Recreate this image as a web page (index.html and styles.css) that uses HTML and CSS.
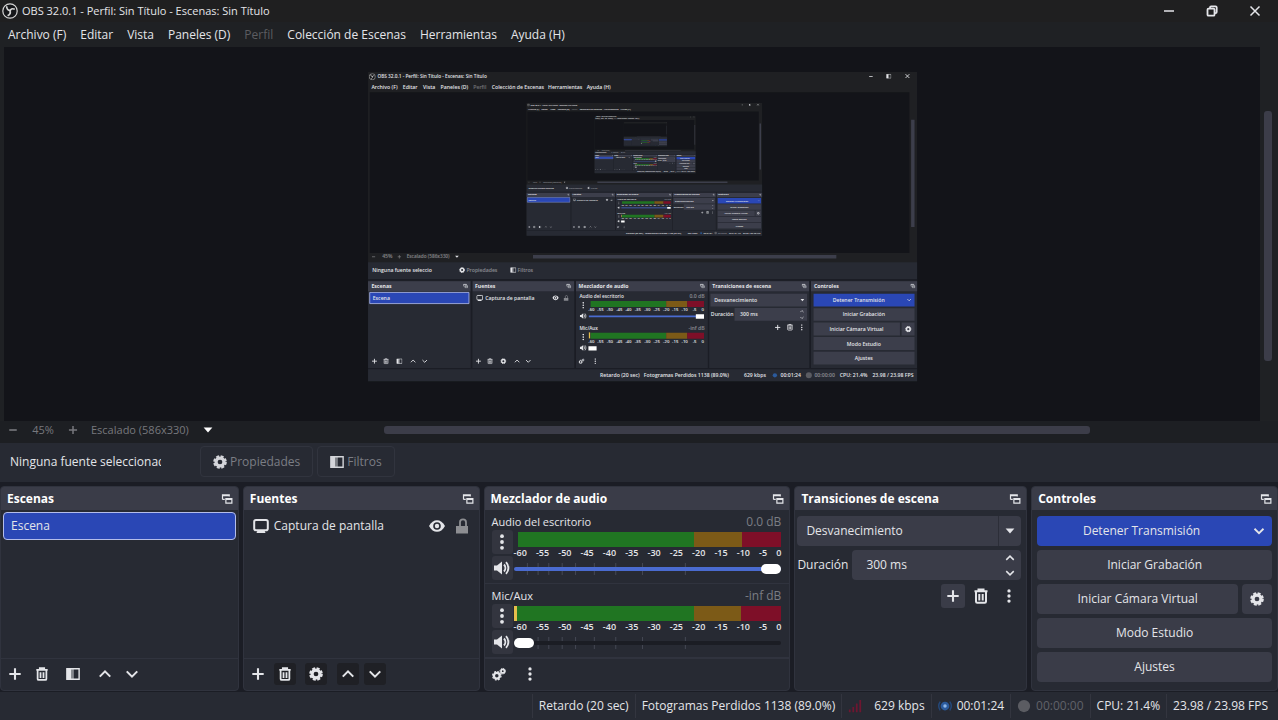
FILE: index.html
```
<!DOCTYPE html>
<html lang="es">
<head>
    <meta charset="UTF-8">
    <meta name="viewport" content="width=device-width, initial-scale=1.0">
    <title>OBS 32.0.1 - Perfil: Sin Título - Escenas: Sin Título</title>
    <link rel="stylesheet" href="styles.css">
</head>
<body>
    <!-- Shared icons -->
    <svg class="sprite" aria-hidden="true">
        <symbol id="plus" viewBox="0 0 16 16"><path d="M8 1.500v13M1.500 8h13" fill="none" stroke="currentColor" stroke-width="2.400"/></symbol>
        <symbol id="minus" viewBox="0 0 16 16"><path d="M2 8h12" fill="none" stroke="currentColor" stroke-width="2.6"/></symbol>
        <symbol id="trash" viewBox="0 0 16 16"><path d="M1.5 3.2h13M5.5 3V1.4h5V3M3 4v9.6c0 .8.5 1.2 1.2 1.2h7.600c.7 0 1.200-.4 1.200-1.200V4M6.300 6v6.500M9.700 6v6.500" fill="none" stroke="currentColor" stroke-width="2"/></symbol>
        <symbol id="filter" viewBox="0 0 16 16"><path d="M1 2h14v12H1z" fill="none" stroke="currentColor" stroke-width="1.6"/><path d="M1 2h5v12H1z" fill="currentColor"/><path d="M6 2h3v12H6z" fill="currentColor" opacity=".5"/></symbol>
        <symbol id="up" viewBox="0 0 16 16"><path d="M2 11l6-6 6 6" fill="none" stroke="currentColor" stroke-width="2.400"/></symbol>
        <symbol id="down" viewBox="0 0 16 16"><path d="M2 5l6 6 6-6" fill="none" stroke="currentColor" stroke-width="2.400"/></symbol>
        <symbol id="caret" viewBox="0 0 16 16"><path d="M1 4h14l-7 8z" fill="currentColor"/></symbol>
        <symbol id="dots" viewBox="0 0 16 16"><circle cx="8" cy="2.200" r="1.900" fill="currentColor"/><circle cx="8" cy="8" r="1.900" fill="currentColor"/><circle cx="8" cy="13.800" r="1.900" fill="currentColor"/></symbol>
        <symbol id="gear" viewBox="0 0 16 16"><circle cx="8" cy="8" r="4.500" fill="none" stroke="currentColor" stroke-width="3.600"/><circle cx="8" cy="8" r="6.600" fill="none" stroke="currentColor" stroke-width="2.400" stroke-dasharray="3.400 1.780"/></symbol>
        <symbol id="gears" viewBox="0 0 16 16"><circle cx="5.500" cy="10" r="3.300" fill="none" stroke="currentColor" stroke-width="2.600"/><circle cx="5.500" cy="10" r="4.800" fill="none" stroke="currentColor" stroke-width="1.400" stroke-dasharray="2.200 1.570"/><circle cx="12.300" cy="4.800" r="2" fill="none" stroke="currentColor" stroke-width="2"/><circle cx="12.300" cy="4.800" r="3.200" fill="none" stroke="currentColor" stroke-dasharray="1.500 1"/></symbol>
        <symbol id="float" viewBox="0 0 16 16"><path d="M2 8.500V2.500h9v2M2 3.500h9M5 8.500H2" fill="none" stroke="currentColor" stroke-width="1.600"/><path d="M6.500 7.500h8v6h-8zM6.500 8.500h8" fill="none" stroke="currentColor" stroke-width="1.600"/></symbol>
        <symbol id="monitor" viewBox="0 0 16 16"><rect x="1.200" y="2" width="13.600" height="10.200" rx="1.800" fill="none" stroke="currentColor" stroke-width="2"/><path d="M4.500 12.500h7l1 2.500h-9z" fill="currentColor"/></symbol>
        <symbol id="eye" viewBox="0 0 16 16"><path d="M0 8c2-4 5-5.800 8-5.800S14 4 16 8c-2 4-5 5.800-8 5.800S2 12 0 8z" fill="currentColor"/><circle cx="8" cy="8" r="3.800" fill="#272a33"/><circle cx="8" cy="8" r="2.200" fill="currentColor"/></symbol>
        <symbol id="unlock" viewBox="0 0 16 16"><path d="M2 8h12v7.500H2z" fill="currentColor"/><path d="M6 8V4.200C6 .5 12 .5 12 4.200V8" fill="none" stroke="currentColor" stroke-width="1.800"/></symbol>
        <symbol id="speaker" viewBox="0 0 16 16"><path d="M0 5.500h3L8 1.500v13l-5-4H0z" fill="currentColor"/><path d="M10 4.500c1.800 2 1.800 5 0 7M12 2.200c3.200 3.300 3.200 8.300 0 11.600" fill="none" stroke="currentColor" stroke-width="1.900"/></symbol>
        <symbol id="obs" viewBox="0 0 16 16"><circle cx="8" cy="8" r="7.200" fill="#16171a" stroke="#d6d6d6" stroke-width="1.200"/><path d="M4.600 3.200c.1 3 1.500 4.300 4 4.500M12.800 6.300c-2.600-1.200-4.300-.3-5 2M5.600 12.700c2.500-1.300 3.300-3.200 2.200-5.400" fill="none" stroke="#d6d6d6" stroke-width="1.700"/></symbol>
    </svg>

    <header class="titlebar">
        <svg class="icon logo"><use href="#obs"/></svg>
        <h1>OBS 32.0.1 - Perfil: Sin Título - Escenas: Sin Título</h1>
        <div class="window-buttons">
            <button aria-label="Minimizar"><svg viewBox="0 0 12 12"><path d="M1 6h10" stroke="currentColor" stroke-width="1.500"/></svg></button>
            <button aria-label="Restaurar"><svg viewBox="0 0 12 12"><path d="M4 3V2.500Q4 1.300 5.200 1.300H9.500Q10.700 1.300 10.700 2.500V7Q10.700 8.200 9.500 8.200H9M2.500 3.700h5q1 0 1 1v5q0 1-1 1h-5q-1 0-1-1v-5q0-1 1-1z" fill="none" stroke="currentColor" stroke-width="1.800"/></svg></button>
            <button aria-label="Cerrar"><svg viewBox="0 0 12 12"><path d="M1.500 1.500l9 9M10.500 1.500l-9 9" stroke="currentColor" stroke-width="1.500"/></svg></button>
        </div>
    </header>

    <nav class="menu">
        <button>Archivo (F)</button>
        <button>Editar</button>
        <button>Vista</button>
        <button>Paneles (D)</button>
        <button disabled>Perfil</button>
        <button>Colección de Escenas</button>
        <button>Herramientas</button>
        <button>Ayuda (H)</button>
    </nav>

    <!-- Captured screen, repeated inside itself -->
    <main class="preview">
        <div class="stage">
            <svg class="capture" viewBox="0 0 1278 720" role="img" aria-label="Captura de pantalla">
                <defs>
                    <g id="scale">
                        <text x="520">-60</text><text x="541">-55</text><text x="563">-50</text><text x="585">-45</text><text x="606">-40</text><text x="628">-35</text><text x="650">-30</text><text x="672">-25</text><text x="694">-20</text><text x="715">-15</text><text x="737">-10</text><text x="760">-5</text><text x="779">0</text>
                    </g>
                    <g id="screen">
                        <path fill="#1f2023" d="M0 0h1278v720H0z"/>
                        <path fill="#131419" d="M4 47h1256v374H4z"/>
                        <path fill="#272a33" d="M0 443h1278v277H0z"/>
                        <path fill="#3c3e4b" d="M1264 111h8v250h-8zM384 426h706v8H384zM0 487h239v23H0zM243 487h237v23H243zM484 487h307v23H484zM794 487h233v23H794zM1031 487h247v23h-247zM797 516h225v30H797zM853 549h169v30H853zM1037 550h235v29h-235zM1037 583h201v30h-201zM1242 583h30v30h-30zM1037 617h235v30h-235zM1037 651h235v30h-235z"/>
                        <path fill="#1b1d25" d="M239 486h4v203h-4zM480 486h4v203h-4zM791 486h3v203h-3zM1027 486h4v203h-4zM0 482h1278v4H0zM0 689h1278v3H0z"/>
                        <path fill="#2a47b5" stroke="#a9b4e6" stroke-width="2" d="M4 513h231v26H4z"/>
                        <path fill="#2a47b5" d="M1037 516h235v30h-235z"/>
                        <path fill="#207522" d="M518 533h176v14H518zM518 607h176v14H518z"/>
                        <path fill="#7c5a17" d="M694 533h49v14h-49zM694 607h49v14h-49z"/>
                        <path fill="#7e0f28" d="M743 533h39v14h-39zM743 607h39v14h-39z"/>
                        <path fill="#4a6bd0" d="M514 567h250v4H514z"/>
                        <path fill="#fff" d="M763 564h19v10h-19zM513 638h19v10h-19z"/>
                        <path fill="#e5bd4c" d="M514 606h3v14h-3z"/>
                        <g color="#e4e5e9">
                            <use href="#obs" x="2" y="3" width="16" height="16"/>
                            <use href="#minus" x="1165" y="5" width="11" height="11"/>
                            <use href="#filter" x="1206" y="4" width="12" height="12"/>
                            <path d="M1251 5l9 9M1260 5l-9 9" stroke="#e4e5e9" stroke-width="2"/>
                            <use href="#minus" x="8" y="425" width="10" height="10" opacity=".5"/><use href="#plus" x="68" y="425" width="10" height="10" opacity=".5"/>
                            <use href="#caret" x="202" y="425" width="10" height="10"/>
                            <use href="#gear" x="212" y="454" width="14" height="14"/>
                            <use href="#filter" x="331" y="454" width="14" height="14"/>
                            <use href="#monitor" x="252" y="518" width="16" height="16"/>
                            <use href="#eye" x="429" y="518" width="15" height="15"/>
                            <use href="#unlock" x="454" y="518" width="14" height="16" opacity=".5"/>
                            <use href="#float" x="221" y="492" width="12" height="12"/><use href="#float" x="461" y="492" width="12" height="12"/><use href="#float" x="772" y="492" width="12" height="12"/><use href="#float" x="1009" y="492" width="12" height="12"/><use href="#float" x="1262" y="492" width="12" height="12"/>
                            <use href="#dots" x="493" y="535" width="16" height="16"/><use href="#dots" x="493" y="609" width="16" height="16"/>
                            <use href="#speaker" x="493" y="560" width="16" height="16"/><use href="#speaker" x="493" y="634" width="16" height="16"/>
                            <use href="#caret" x="1006" y="526" width="10" height="10"/><use href="#down" x="1254" y="525" width="11" height="11"/>
                            <use href="#up" x="1005" y="552" width="10" height="10"/><use href="#down" x="1005" y="567" width="10" height="10"/>
                            <use href="#plus" x="946" y="587" width="15" height="15"/><use href="#trash" x="974" y="586" width="16" height="16"/><use href="#dots" x="1002" y="587" width="15" height="15"/>
                            <use href="#gear" x="1250" y="591" width="15" height="15"/>
                            <use href="#plus" x="8" y="666" width="14" height="14"/><use href="#trash" x="35" y="666" width="14" height="14"/><use href="#filter" x="66" y="666" width="14" height="14"/><use href="#up" x="98" y="666" width="14" height="14"/><use href="#down" x="125" y="666" width="14" height="14"/>
                            <use href="#plus" x="250" y="666" width="14" height="14"/><use href="#trash" x="277" y="666" width="14" height="14"/><use href="#gear" x="308" y="666" width="14" height="14"/><use href="#up" x="340" y="666" width="14" height="14"/><use href="#down" x="366" y="666" width="14" height="14"/>
                            <use href="#gears" x="490" y="666" width="14" height="14"/><use href="#dots" x="522" y="666" width="14" height="14"/>
                            <circle cx="947" cy="706" r="5" fill="#2b5a9c"/><circle cx="1026" cy="706" r="7" fill="#5b5c62"/>
                        </g>
                        <g class="screen-text">
                            <text x="22" y="15" class="screen-title">OBS 32.0.1 - Perfil: Sin Título - Escenas: Sin Título</text>
                            <text x="8" y="39">Archivo (F)</text><text x="81" y="39">Editar</text><text x="128" y="39">Vista</text><text x="169" y="39">Paneles (D)</text><text x="245" y="39" opacity=".4">Perfil</text><text x="288" y="39">Colección de Escenas</text><text x="419" y="39">Herramientas</text><text x="509" y="39">Ayuda (H)</text>
                            <g opacity=".5"><text x="33" y="434">45%</text><text x="90" y="434" class="screen-title">Escalado (586x330)</text><text x="229" y="466">Propiedades</text><text x="348" y="466">Filtros</text><text x="748" y="526">0.0 dB</text><text x="746" y="600">-inf dB</text><text x="1039" y="711">00:00:00</text></g>
                            <text x="10" y="466">Ninguna fuente seleccio</text>
                            <g font-weight="700"><text x="8" y="502">Escenas</text><text x="249" y="502">Fuentes</text><text x="490" y="502">Mezclador de audio</text><text x="801" y="502">Transiciones de escena</text><text x="1038" y="502">Controles</text></g>
                            <text x="11" y="530">Escena</text><text x="273" y="530">Captura de pantalla</text><text x="492" y="526" class="screen-title">Audio del escritorio</text><text x="492" y="600" class="screen-title">Mic/Aux</text>
                            <text x="806" y="535">Desvanecimiento</text><text x="798" y="569">Duración</text><text x="866" y="569">300 ms</text>
                            <g class="screen-scale"><use href="#scale" y="557"/><use href="#scale" y="630"/></g>
                            <g text-anchor="middle"><text x="1142" y="535">Detener Transmisión</text><text x="1154" y="569">Iniciar Grabación</text><text x="1137" y="603">Iniciar Cámara Virtual</text><text x="1154" y="637">Modo Estudio</text><text x="1154" y="671">Ajustes</text></g>
                            <text x="540" y="711">Retardo (20 sec)</text><text x="642" y="711">Fotogramas Perdidos 1138 (89.0%)</text><text x="875" y="711">629 kbps</text><text x="960" y="711">00:01:24</text><text x="1098" y="711">CPU: 21.4%</text><text x="1174" y="711">23.98 / 23.98 FPS</text>
                        </g>
                    </g>
                </defs>
                <use href="#screen"/>
                <g transform="translate(369 72) scale(.429)">
                    <use href="#screen"/>
                    <g transform="translate(369 72) scale(.429)">
                        <use href="#screen"/>
                        <g transform="translate(369 72) scale(.429)">
                            <use href="#screen"/>
                        </g>
                    </g>
                </g>
            </svg>
        </div>
        <div class="vscroll"><span class="thumb"></span></div>
    </main>

    <div class="zoombar">
        <button aria-label="Alejar"><svg class="icon tiny"><use href="#minus"/></svg></button>
        <span class="percent">45%</span>
        <button aria-label="Acercar"><svg class="icon tiny"><use href="#plus"/></svg></button>
        <div class="scale-select">
            <select aria-label="Escala"><option>Escalado (586x330)</option></select>
            <svg class="icon tiny"><use href="#caret"/></svg>
        </div>
        <div class="hscroll"><span class="thumb"></span></div>
    </div>

    <section class="context">
        <span class="source-name">Ninguna fuente seleccionada</span>
        <button disabled><svg class="icon"><use href="#gear"/></svg>Propiedades</button>
        <button disabled><svg class="icon"><use href="#filter"/></svg>Filtros</button>
    </section>

    <div class="docks">
        <section class="dock">
            <header><h2>Escenas</h2><button aria-label="Desacoplar"><svg class="icon small"><use href="#float"/></svg></button></header>
            <ul class="list">
                <li class="scene selected">Escena</li>
            </ul>
            <footer class="tools">
                <button aria-label="Añadir escena"><svg class="icon"><use href="#plus"/></svg></button>
                <button aria-label="Eliminar escena"><svg class="icon"><use href="#trash"/></svg></button>
                <button class="wide" aria-label="Filtros de escena"><svg class="icon"><use href="#filter"/></svg></button>
                <button aria-label="Subir"><svg class="icon"><use href="#up"/></svg></button>
                <button aria-label="Bajar"><svg class="icon"><use href="#down"/></svg></button>
            </footer>
        </section>

        <section class="dock">
            <header><h2>Fuentes</h2><button aria-label="Desacoplar"><svg class="icon small"><use href="#float"/></svg></button></header>
            <ul class="list">
                <li class="source">
                    <svg class="icon large"><use href="#monitor"/></svg>
                    <span>Captura de pantalla</span>
                    <button aria-label="Visible"><svg class="icon large"><use href="#eye"/></svg></button>
                    <button class="dim" aria-label="Bloquear"><svg class="icon large"><use href="#unlock"/></svg></button>
                </li>
            </ul>
            <footer class="tools dark">
                <button aria-label="Añadir fuente"><svg class="icon"><use href="#plus"/></svg></button>
                <button aria-label="Eliminar fuente"><svg class="icon"><use href="#trash"/></svg></button>
                <button class="wide" aria-label="Propiedades de fuente"><svg class="icon"><use href="#gear"/></svg></button>
                <button aria-label="Subir"><svg class="icon"><use href="#up"/></svg></button>
                <button aria-label="Bajar"><svg class="icon"><use href="#down"/></svg></button>
            </footer>
        </section>

        <section class="dock">
            <header><h2>Mezclador de audio</h2><button aria-label="Desacoplar"><svg class="icon small"><use href="#float"/></svg></button></header>
            <div class="mixer">
                <div class="channel">
                    <div class="channel-name"><label for="desktop">Audio del escritorio</label><output>0.0 dB</output></div>
                    <div class="channel-row">
                        <button aria-label="Opciones"><svg class="icon large"><use href="#dots"/></svg></button>
                        <div class="levels">
                            <div class="meter"></div>
                            <div class="ticks"><span>-60</span><span>-55</span><span>-50</span><span>-45</span><span>-40</span><span>-35</span><span>-30</span><span>-25</span><span>-20</span><span>-15</span><span>-10</span><span>-5</span><span>0</span></div>
                        </div>
                    </div>
                    <div class="channel-row">
                        <button aria-label="Silenciar"><svg class="icon large"><use href="#speaker"/></svg></button>
                        <div class="volume full">
                            <svg class="marks"><line x1="5%" x2="5%" y2="12"/><line x1="9%" x2="9%" y2="12"/><line x1="13%" x2="13%" y2="12"/><line x1="18%" x2="18%" y2="12"/><line x1="23%" x2="23%" y2="12"/><line x1="30%" x2="30%" y2="12"/><line x1="38%" x2="38%" y2="12"/><line x1="48%" x2="48%" y2="12"/><line x1="64%" x2="64%" y2="12"/></svg>
                            <input id="desktop" type="range" min="0" max="100" value="100">
                        </div>
                    </div>
                </div>
                <div class="channel">
                    <div class="channel-name"><label for="mic">Mic/Aux</label><output>-inf dB</output></div>
                    <div class="channel-row">
                        <button aria-label="Opciones"><svg class="icon large"><use href="#dots"/></svg></button>
                        <div class="levels">
                            <div class="meter peak"></div>
                            <div class="ticks"><span>-60</span><span>-55</span><span>-50</span><span>-45</span><span>-40</span><span>-35</span><span>-30</span><span>-25</span><span>-20</span><span>-15</span><span>-10</span><span>-5</span><span>0</span></div>
                        </div>
                    </div>
                    <div class="channel-row">
                        <button aria-label="Silenciar"><svg class="icon large"><use href="#speaker"/></svg></button>
                        <div class="volume">
                            <svg class="marks"><line x1="9%" x2="9%" y2="12"/><line x1="13%" x2="13%" y2="12"/><line x1="18%" x2="18%" y2="12"/><line x1="23%" x2="23%" y2="12"/><line x1="30%" x2="30%" y2="12"/><line x1="38%" x2="38%" y2="12"/><line x1="48%" x2="48%" y2="12"/><line x1="64%" x2="64%" y2="12"/></svg>
                            <input id="mic" type="range" min="0" max="100" value="0">
                        </div>
                    </div>
                </div>
            </div>
            <footer class="tools mixer-tools">
                <button aria-label="Propiedades avanzadas de audio"><svg class="icon"><use href="#gears"/></svg></button>
                <button aria-label="Menú del mezclador"><svg class="icon"><use href="#dots"/></svg></button>
            </footer>
        </section>

        <section class="dock">
            <header><h2>Transiciones de escena</h2><button aria-label="Desacoplar"><svg class="icon small"><use href="#float"/></svg></button></header>
            <div class="transitions">
                <div class="combo">
                    <select aria-label="Transición"><option>Desvanecimiento</option></select>
                    <span class="combo-arrow"><svg class="icon tiny"><use href="#caret"/></svg></span>
                </div>
                <div class="duration">
                    <label for="duration">Duración</label>
                    <div class="spin">
                        <input id="duration" type="text" value="300 ms">
                        <div class="spin-buttons">
                            <button aria-label="Aumentar"><svg class="icon tiny"><use href="#up"/></svg></button>
                            <button aria-label="Reducir"><svg class="icon tiny"><use href="#down"/></svg></button>
                        </div>
                    </div>
                </div>
                <div class="transition-tools">
                    <button class="filled" aria-label="Añadir transición"><svg class="icon"><use href="#plus"/></svg></button>
                    <button aria-label="Eliminar transición"><svg class="icon large"><use href="#trash"/></svg></button>
                    <button aria-label="Más"><svg class="icon"><use href="#dots"/></svg></button>
                </div>
            </div>
        </section>

        <section class="dock">
            <header><h2>Controles</h2><button aria-label="Desacoplar"><svg class="icon small"><use href="#float"/></svg></button></header>
            <div class="controls">
                <div class="split primary"><button>Detener Transmisión</button><button class="more" aria-label="Más opciones"><svg class="icon small"><use href="#down"/></svg></button></div>
                <button>Iniciar Grabación</button>
                <div class="split camera"><button>Iniciar Cámara Virtual</button><button class="more" aria-label="Configurar cámara virtual"><svg class="icon"><use href="#gear"/></svg></button></div>
                <button>Modo Estudio</button>
                <button>Ajustes</button>
            </div>
        </section>
    </div>

    <footer class="statusbar">
        <span>Retardo (20 sec)</span>
        <span>Fotogramas Perdidos 1138 (89.0%)</span>
        <span class="bitrate"><svg class="icon" viewBox="0 0 16 16"><path d="M1 12h2v3H1zM5 9h2v6H5zM9 5h2v10H9zM13 1h2v14h-2z" fill="#6e1630"/></svg>629 kbps</span>
        <span><svg class="icon" viewBox="0 0 16 16"><circle cx="8" cy="8" r="5" fill="#2b5a9c"/><circle cx="8" cy="8" r="2" fill="#8fb6e6"/><path d="M2.500 3c-2 3-2 7 0 10M13.500 3c2 3 2 7 0 10" fill="none" stroke="#24497c" stroke-width="1.600"/></svg>00:01:24</span>
        <span class="off"><svg class="icon" viewBox="0 0 16 16"><circle cx="8" cy="8" r="7" fill="#5b5c62"/></svg>00:00:00</span>
        <span>CPU: 21.4%</span>
        <span>23.98 / 23.98 FPS</span>
    </footer>
</body>
</html>
```
FILE: styles.css
```
/* Basic Styling */
* {
    box-sizing: border-box;
}

body {
    display: flex;
    flex-direction: column;
    min-height: 100vh;
    margin: 0;
    font-family: "Open Sans", "Noto Sans", sans-serif;
    font-size: 12px;
    line-height: 16px;
    font-weight: 500;
    color: #e4e5e9;
    background-color: #1b1d25;
}

button, input, select {
    font: inherit;
    color: inherit;
    background: none;
    border: none;
    padding: 0;
    margin: 0;
}

button {
    display: flex;
    align-items: center;
    justify-content: center;
}

h1, h2, ul {
    margin: 0;
    padding: 0;
    font-size: 12px;
}

.sprite {
    position: absolute;
    width: 0;
    height: 0;
}

/* Icon sizes */
.icon { width: 14px; height: 14px; flex: none; }
.icon.tiny { width: 10px; height: 10px; }
.icon.small { width: 12px; height: 12px; }
.icon.large { width: 16px; height: 16px; }

/* Title bar and menu */
.titlebar {
    display: flex;
    align-items: center;
    gap: 4px;
    height: 22px;
    padding: 0 2px;
    background-color: #1f1f20;
}

.titlebar h1 {
    flex: 1;
    font-size: 11px;
    font-weight: 500;
}

.icon.logo { width: 16px; height: 16px; }

.window-buttons { display: flex; }
.window-buttons button { width: 43px; }
.window-buttons svg { width: 12px; height: 12px; }

.menu {
    display: flex;
    gap: 14px;
    height: 25px;
    padding: 0 8px;
    background-color: #1f2124;
}

.menu button:disabled { color: #5c5d61; }

/* Preview */
.preview {
    display: flex;
    flex: 1;
    min-height: 0;
    padding-left: 4px;
    background-color: #1f2124;
}

.stage {
    flex: 1;
    display: flex;
    align-items: center;
    justify-content: center;
    padding: 0 0 14px 22px;
    background-color: #131419;
}

.capture {
    width: 44.5%;
    display: block;
}

.screen-text {
    fill: #e4e5e9;
    font-size: 12px;
    font-weight: 600;
}

.screen-title { font-size: 11px; }
.screen-scale { font-size: 10px; text-anchor: middle; }

.vscroll {
    width: 18px;
    padding: 64px 6px 60px 4px;
}

.thumb {
    display: block;
    height: 100%;
    border-radius: 3px;
    background-color: #3c3d49;
}

/* Zoom bar */
.zoombar {
    display: flex;
    align-items: center;
    gap: 13px;
    height: 22px;
    padding: 0 8px 4px;
    font-size: 11px;
    background-color: #1d1f23;
    color: #77787d;
}

.zoombar .percent { width: 24px; text-align: center; }

.scale-select {
    display: flex;
    align-items: center;
    justify-content: space-between;
    width: 122px;
}

.scale-select select { appearance: none; flex: none; }
.scale-select .icon { color: #fff; }

.hscroll {
    flex: 1;
    height: 8px;
    padding: 0 180px 0 158px;
}

/* Context bar */
.context {
    display: flex;
    align-items: center;
    gap: 4px;
    height: 39px;
    padding: 0 10px 2px;
    margin-bottom: 4px;
    background-color: #272a33;
}

.source-name {
    width: 151px;
    margin-right: 35px;
    overflow: hidden;
    white-space: nowrap;
}

.context button {
    gap: 3px;
    height: 31px;
    padding: 0 12px;
    border: 1px solid #31343e;
    border-radius: 4px;
    color: #7b7d84;
}

.context .icon { color: #d4d5da; }

/* Docks */
.docks {
    display: grid;
    grid-template-columns: 239fr 237fr 307fr 233fr 247fr;
    gap: 4px;
    height: 203px;
}

.dock {
    display: flex;
    flex-direction: column;
    min-width: 0;
    border: 1px solid #30333e;
    border-radius: 4px;
    background-color: #272a33;
}

.dock > header {
    display: flex;
    align-items: center;
    justify-content: space-between;
    height: 23px;
    padding: 0 5px 0 6px;
    background-color: #3a3c48;
    border-radius: 3px 3px 0 0;
}

.dock h2 { font-weight: 700; color: #fff; }

.list {
    flex: 1;
    padding: 2px;
    list-style: none;
}

.list li {
    display: flex;
    align-items: center;
    height: 28px;
    padding: 0 7px;
}

.scene.selected {
    background-color: #2a47b5;
    border: 1px solid #b4bdea;
    border-radius: 4px;
}

.source { gap: 5px; }
.source span { flex: 1; }
.source button + button { margin-left: 4px; }
.source .dim { color: #8d8e92; }

.tools {
    display: flex;
    align-items: center;
    gap: 5px;
    height: 32px;
    padding: 0 3px 2px;
    border-top: 1px solid #30333e;
}

.tools button { width: 22px; height: 22px; border-radius: 3px; }
.tools .wide { margin: 0 5px 0 4px; }
.tools.dark button + button { background-color: #1f2025; }
.mixer-tools { gap: 9px; }

/* Audio mixer */
.mixer { flex: 1; }

.channel {
    height: 74px;
    padding: 4px 8px 0 7px;
    border-bottom: 1px solid #30333e;
}

.channel-name {
    display: flex;
    justify-content: space-between;
    font-size: 11px;
}

.channel-name output { font-size: 12px; color: #7b7d84; }

.channel-row { display: flex; gap: 1px; height: 26px; }

.channel-row button {
    flex: none;
    width: 21px;
    height: 24px;
    border-radius: 3px;
    background-color: #33353f;
}

.levels { flex: 1; padding-top: 2px; }

.meter {
    height: 15px;
    margin-left: 4px;
    background: linear-gradient(to right, #207522 67%, #7c5a17 67% 85%, #7e0f28 85%);
}

.meter.peak {
    margin-left: 0;
    border-left: 3px solid #e5bd4c;
}

.ticks {
    display: flex;
    justify-content: space-between;
    font-size: 9px;
    line-height: 12px;
    font-weight: 600;
}

.volume {
    position: relative;
    flex: 1;
    display: flex;
    align-items: center;
    height: 26px;
}

.marks {
    position: absolute;
    top: 7px;
    left: 0;
    width: 100%;
    height: 12px;
    stroke: #454854;
}

.volume input {
    position: relative;
    appearance: none;
    width: 100%;
    height: 4px;
    border-radius: 2px;
    background-color: #1b1d24;
}

.volume.full input { background-color: #4a6bd0; }

.volume input::-webkit-slider-thumb {
    appearance: none;
    width: 20px;
    height: 10px;
    border-radius: 5px;
    background-color: #fff;
}

/* Scene transitions */
.transitions {
    display: flex;
    flex-direction: column;
    gap: 4px;
    padding: 6px 5px 0 2px;
}

.combo, .spin {
    display: flex;
    height: 30px;
    border-radius: 4px;
    background-color: #3a3c48;
}

.combo select {
    appearance: none;
    flex: 1;
    padding-left: 9px;
}

.combo-arrow {
    display: flex;
    align-items: center;
    padding: 0 6px;
    border-left: 1px solid #2c2e38;
}

.duration {
    display: flex;
    align-items: center;
    gap: 4px;
}

.spin { flex: 1; min-width: 0; }
.spin input { flex: 1; min-width: 0; padding-left: 14px; }

.spin-buttons {
    display: flex;
    flex-direction: column;
    justify-content: space-around;
    padding: 0 6px;
}

.transition-tools {
    display: flex;
    justify-content: flex-end;
    gap: 4px;
}

.transition-tools button { width: 24px; height: 24px; border-radius: 3px; }
.transition-tools .filled { background-color: #3a3c48; }

/* Controls */
.controls {
    display: flex;
    flex-direction: column;
    gap: 4px;
    padding: 6px 5px;
}

.controls button {
    height: 30px;
    border-radius: 4px;
    background-color: #3a3c48;
}

.split { display: flex; gap: 4px; }
.split button:first-child { flex: 1; }
.split .more { width: 30px; }
.primary { gap: 0; border-radius: 4px; background-color: #2a47b5; }
.primary button { background: none; }
.primary .more { width: 26px; }

/* Status bar */
.statusbar {
    display: flex;
    justify-content: flex-end;
    align-items: center;
    height: 28px;
    margin-top: 3px;
    padding-right: 4px;
    background-color: #272a33;
}

.statusbar span {
    display: flex;
    align-items: center;
    gap: 5px;
    padding: 4px 6px;
    border-left: 1px solid #33353f;
}

.statusbar .bitrate { gap: 12px; }
.statusbar .off { color: #606269; }
```
